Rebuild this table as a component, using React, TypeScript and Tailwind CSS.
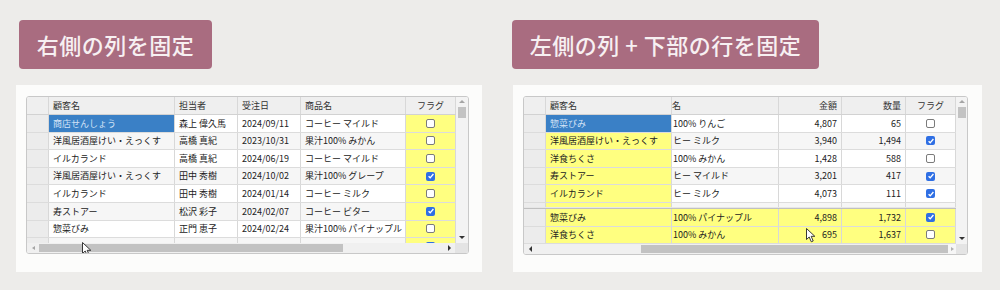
import React from 'react';

const FONT = "font-['Noto_Sans_CJK_JP','Noto_Sans',sans-serif]";

type Row = { c: string[]; on?: boolean };

function Check({ on }: { on?: boolean }) {
  if (on) {
    return (
      <span className="flex h-[9px] w-[9px] items-center justify-center rounded-[2px] bg-[#2f6fe4]">
        <svg viewBox="0 0 10 10" className="h-[8px] w-[8px]">
          <path d="M2 5.3l2 2 4-4.8" fill="none" stroke="white" strokeWidth="1.7" />
        </svg>
      </span>
    );
  }
  return <span className="block h-[9px] w-[9px] rounded-[2px] border border-[#7b7b7b] bg-white" />;
}

function Cell({ className = '', children }: { className?: string; children?: React.ReactNode }) {
  return (
    <div className={`flex h-full shrink-0 items-center overflow-hidden whitespace-nowrap border-r border-[#d8d8d8] ${className}`}>
      {children}
    </div>
  );
}

function Cursor() {
  return (
    <svg viewBox="0 0 10 15" className="h-[15px] w-[10px]">
      <path d="M0.5 0.5 L0.5 11.5 L3.2 9 L5.3 13.8 L7.2 13 L5.2 8.3 L8.8 8.3 Z" fill="white" stroke="#222" strokeWidth="0.9" strokeLinejoin="round" />
    </svg>
  );
}

function VScroll() {
  return (
    <div className="flex h-full w-full flex-col items-center bg-[#f3f3f3]">
      <span className="mt-[3px] h-0 w-0 border-x-[3px] border-b-[3px] border-x-transparent border-b-[#a5a5a5]" />
      <span className="mt-[4px] h-[11px] w-[8px] bg-[#c3c3c3]" />
      <span className="flex-1" />
      <span className="mb-[4px] h-0 w-0 border-x-[3px] border-t-[3px] border-x-transparent border-t-[#333]" />
    </div>
  );
}

const leftRows: Row[] = [
  { c: ['商店せんしょう', '森上 偉久馬', '2024/09/11', 'コーヒー マイルド'] },
  { c: ['洋風居酒屋けい・えっくす', '高橋 真紀', '2023/10/31', '果汁100% みかん'] },
  { c: ['イルカランド', '高橋 真紀', '2024/06/19', 'コーヒー マイルド'] },
  { c: ['洋風居酒屋けい・えっくす', '田中 秀樹', '2024/10/02', '果汁100% グレープ'], on: true },
  { c: ['イルカランド', '田中 秀樹', '2024/01/14', 'コーヒー ミルク'] },
  { c: ['寿ストアー', '松沢 彩子', '2024/02/07', 'コーヒー ビター'], on: true },
  { c: ['惣菜びみ', '正門 恵子', '2024/02/24', '果汁100% パイナップル'] },
  // only the top edge of this row shows under the scrollbar
  { c: ['', '', '', ''], on: true },
];

const rightRows: Row[] = [
  { c: ['惣菜びみ', '100% りんご', '4,807', '65'] },
  { c: ['洋風居酒屋けい・えっくす', 'ヒー ミルク', '3,940', '1,494'], on: true },
  { c: ['洋食ちくさ', '100% みかん', '1,428', '588'] },
  { c: ['寿ストアー', 'ヒー マイルド', '3,201', '417'], on: true },
  { c: ['イルカランド', 'ヒー ミルク', '4,073', '111'], on: true },
  { c: ['', '', '', ''] },
];

const frozenRows: Row[] = [
  { c: ['惣菜びみ', '100% パイナップル', '4,898', '1,732'], on: true },
  { c: ['洋食ちくさ', '100% みかん', '695', '1,637'] },
];

function LeftGrid() {
  return (
    <div className="relative flex h-[158px] w-[443px] flex-col overflow-hidden rounded-[3px] border border-[#c8c8c8] bg-white text-[9px] text-[#222]">
      <div className="flex h-[146px]">
        <div className="w-[429px] overflow-hidden">
          <div className="flex h-[18px] border-b border-[#d2d2d2] bg-[#efefef] text-[#333]">
            <Cell className="w-[22px]" />
            <Cell className="w-[126px] px-[4px]">顧客名</Cell>
            <Cell className="w-[63px] px-[4px]">担当者</Cell>
            <Cell className="w-[63px] px-[4px]">受注日</Cell>
            <Cell className="w-[105px] px-[4px]">商品名</Cell>
            <Cell className="w-[50px] justify-center">フラグ</Cell>
          </div>
          {leftRows.map((r, i) => (
            <div key={i} className={`flex h-[17.6px] border-b border-[#dcdcdc] ${i % 2 === 1 ? 'bg-[#f6f6f6]' : 'bg-white'}`}>
              <Cell className="w-[22px] bg-[#ececec]" />
              <Cell className={`w-[126px] px-[4px] ${i === 0 ? 'bg-[#3a80c6] text-[#d4e3f6]' : ''}`}>{r.c[0]}</Cell>
              <Cell className="w-[63px] px-[4px]">{r.c[1]}</Cell>
              <Cell className="w-[63px] px-[4px]">{r.c[2]}</Cell>
              <Cell className="w-[105px] px-[4px]">{r.c[3]}</Cell>
              <Cell className="w-[50px] justify-center bg-[#ffff80]">
                <Check on={r.on} />
              </Cell>
            </div>
          ))}
        </div>
        <div className="w-[12px]">
          <VScroll />
        </div>
      </div>
      <div className="flex h-[10px] bg-[#f0f0f0]">
        <div className="flex w-[12px] items-center justify-center">
          <span className="h-0 w-0 border-y-[2.5px] border-r-[3px] border-y-transparent border-r-[#a5a5a5]" />
        </div>
        <div className="my-[1px] w-[304px] bg-[#c2c2c2]" />
        <div className="flex-1" />
        <div className="flex w-[12px] items-center justify-center">
          <span className="h-0 w-0 border-y-[3px] border-l-[3px] border-y-transparent border-l-[#333]" />
        </div>
        <div className="w-[13px] bg-[#e4e4e4]" />
      </div>
      <div className="absolute left-[55px] top-[145px]">
        <Cursor />
      </div>
    </div>
  );
}

function RightRow({ r, i, frozen }: { r: Row; i: number; frozen?: boolean }) {
  const sel = !frozen && i === 0;
  const bg = frozen ? 'bg-[#ffff80]' : i % 2 === 1 ? 'bg-[#f6f6f6]' : 'bg-white';
  return (
    <div className={`flex ${frozen ? 'h-[17.5px]' : 'h-[17.6px]'} border-b border-[#dcdcdc] ${bg}`}>
      <Cell className="w-[22px] bg-[#ececec]" />
      <Cell className={`w-[126px] px-[4px] ${sel ? 'bg-[#3a80c6] text-[#d4e3f6]' : 'bg-[#ffff80]'}`}>{r.c[0]}</Cell>
      <Cell className="w-[107px] pl-[1px]">{r.c[1]}</Cell>
      <Cell className="w-[63px] justify-end px-[4px]">{r.c[2]}</Cell>
      <Cell className="w-[64px] justify-end px-[4px]">{r.c[3]}</Cell>
      <Cell className="w-[50px] justify-center">
        <Check on={r.on} />
      </Cell>
    </div>
  );
}

function RightGrid() {
  return (
    <div className="relative flex h-[159px] w-[445px] flex-col overflow-hidden rounded-[3px] border border-[#c8c8c8] bg-white text-[9px] text-[#222]">
      <div className="flex h-[147px]">
        <div className="flex w-[432px] flex-col">
          <div className="h-[110px] overflow-hidden">
            <div className="flex h-[18px] border-b border-[#d2d2d2] bg-[#efefef] text-[#333]">
              <Cell className="w-[22px]" />
              <Cell className="w-[126px] px-[4px]">顧客名</Cell>
              <Cell className="w-[107px]">名</Cell>
              <Cell className="w-[63px] justify-end px-[4px]">金額</Cell>
              <Cell className="w-[64px] justify-end px-[4px]">数量</Cell>
              <Cell className="w-[50px] justify-center">フラグ</Cell>
            </div>
            {rightRows.map((r, i) => (
              <RightRow key={i} r={r} i={i} />
            ))}
          </div>
          <div className="h-[2px] border-t border-[#e6e6e6] bg-[#c0c0c0]" />
          {frozenRows.map((r, i) => (
            <RightRow key={i} r={r} i={i} frozen />
          ))}
        </div>
        <div className="w-[11px]">
          <VScroll />
        </div>
      </div>
      <div className="flex h-[10px] bg-[#f0f0f0]">
        <div className="flex w-[12px] items-center justify-center">
          <span className="h-0 w-0 border-y-[3px] border-r-[3px] border-y-transparent border-r-[#333]" />
        </div>
        <div className="w-[105px]" />
        <div className="my-[1px] w-[307px] bg-[#c2c2c2]" />
        <div className="flex w-[8px] items-center justify-center bg-[#f6f6f6]">
          <span className="h-0 w-0 border-y-[2.5px] border-l-[3px] border-y-transparent border-l-[#b0b0b0]" />
        </div>
        <div className="flex-1 bg-[#e4e4e4]" />
      </div>
      <div className="absolute left-[282px] top-[131px]">
        <Cursor />
      </div>
    </div>
  );
}

function Label({ children, className = '' }: { children: React.ReactNode; className?: string }) {
  return (
    <div className={`flex h-[49px] items-center justify-center rounded-[4px] bg-[#a96c80] text-[22px] font-medium tracking-[0.5px] text-[#f7f0f2] ${className}`}>
      {children}
    </div>
  );
}

export default function App() {
  return (
    <div className={`flex h-[290px] w-[1000px] gap-[30px] bg-[#edecea] pl-[16px] pt-[20px] ${FONT}`}>
      <div className="flex w-[466px] flex-col">
        <Label className="ml-[3px] w-[193px]">右側の列を固定</Label>
        <div className="mt-[16px] h-[187px] w-[466px] bg-[#fcfcfb] pl-[10px] pt-[11px]">
          <LeftGrid />
        </div>
      </div>
      <div className="flex w-[470px] flex-col">
        <Label className="w-[307px]">左側の列 + 下部の行を固定</Label>
        <div className="ml-[1px] mt-[16px] h-[187px] w-[469px] bg-[#fcfcfb] pl-[10px] pt-[11px]">
          <RightGrid />
        </div>
      </div>
    </div>
  );
}
